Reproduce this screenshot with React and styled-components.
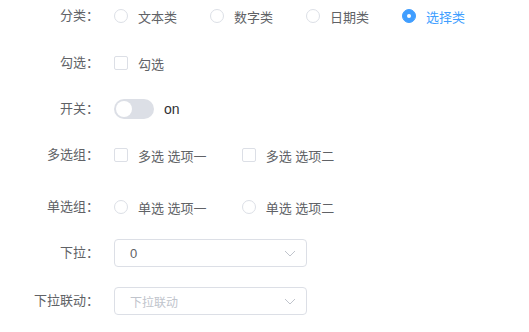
import React, { useState } from "react";
import styled, { createGlobalStyle } from "styled-components";

const GlobalStyle = createGlobalStyle`
  body {
    margin: 0;
    background: #fff;
    font-family: "Liberation Sans", "Noto Sans CJK SC", sans-serif;
    font-size: 13px;
    color: #606266;
  }
`;

const Form = styled.div`
  display: flex;
  flex-direction: column;
  padding-top: 2px;
`;

const Item = styled.div`
  display: flex;
  align-items: center;
  height: 28px;
  margin-bottom: ${(p) => p.$gap}px;
`;

const Label = styled.label`
  width: 114px;
  box-sizing: border-box;
  padding-right: 15px;
  text-align: right;
  color: #606266;
  line-height: 28px;
`;

const Content = styled.div`
  display: flex;
  align-items: center;
`;

const Choice = styled.label`
  display: flex;
  align-items: center;
  margin-right: ${(p) => p.$mr || 33}px;
  color: ${(p) => (p.$active ? "#409eff" : "#606266")};
  cursor: pointer;
  white-space: nowrap;
`;

const RadioDot = styled.span`
  width: 14px;
  height: 14px;
  box-sizing: border-box;
  border-radius: 50%;
  border: 1px solid ${(p) => (p.$on ? "#409eff" : "#dcdfe6")};
  background: ${(p) => (p.$on ? "#409eff" : "#fff")};
  margin-right: 10px;
  display: flex;
  align-items: center;
  justify-content: center;
  &::after {
    content: "";
    width: 4px;
    height: 4px;
    border-radius: 50%;
    background: #fff;
    display: ${(p) => (p.$on ? "block" : "none")};
  }
`;

const Box = styled.span`
  width: 14px;
  height: 14px;
  box-sizing: border-box;
  border-radius: 2px;
  border: 1px solid #dcdfe6;
  background: #fff;
  margin-right: 10px;
`;

const Switch = styled.span`
  width: 40px;
  height: 20px;
  border-radius: 10px;
  background: #dcdfe6;
  position: relative;
  margin-right: 10px;
  &::after {
    content: "";
    position: absolute;
    top: 2px;
    left: 2px;
    width: 16px;
    height: 16px;
    border-radius: 50%;
    background: #fff;
  }
`;

const SwitchText = styled.span`
  color: #303133;
  font-size: 14px;
`;

const Select = styled.div`
  width: 193px;
  height: 28px;
  box-sizing: border-box;
  border: 1px solid #dcdfe6;
  border-radius: 4px;
  display: flex;
  align-items: center;
  justify-content: space-between;
  padding: 0 10px 0 15px;
  color: ${(p) => (p.$placeholder ? "#c0c4cc" : "#606266")};
  font-size: ${(p) => (p.$placeholder ? 12 : 13)}px;
`;

const Arrow = () => (
  <svg width="12" height="12" viewBox="0 0 12 12">
    <path d="M1 4l5 5 5-5" fill="none" stroke="#c0c4cc" strokeWidth="1" />
  </svg>
);

const types = ["文本类", "数字类", "日期类", "选择类"];

export default function App() {
  const [type, setType] = useState("选择类");
  return (
    <>
      <GlobalStyle />
      <Form>
        <Item $gap={19}>
          <Label>分类：</Label>
          <Content>
            {types.map((t) => (
              <Choice key={t} $active={type === t} onClick={() => setType(t)}>
                <RadioDot $on={type === t} />
                {t}
              </Choice>
            ))}
          </Content>
        </Item>
        <Item $gap={18}>
          <Label>勾选：</Label>
          <Content>
            <Choice>
              <Box />
              勾选
            </Choice>
          </Content>
        </Item>
        <Item $gap={18}>
          <Label>开关：</Label>
          <Content>
            <Switch />
            <SwitchText>on</SwitchText>
          </Content>
        </Item>
        <Item $gap={24}>
          <Label>多选组：</Label>
          <Content>
            <Choice $mr={35}>
              <Box />
              多选 选项一
            </Choice>
            <Choice>
              <Box />
              多选 选项二
            </Choice>
          </Content>
        </Item>
        <Item $gap={18}>
          <Label>单选组：</Label>
          <Content>
            <Choice $mr={35}>
              <RadioDot />
              单选 选项一
            </Choice>
            <Choice>
              <RadioDot />
              单选 选项二
            </Choice>
          </Content>
        </Item>
        <Item $gap={20}>
          <Label>下拉：</Label>
          <Select>
            <span>0</span>
            <Arrow />
          </Select>
        </Item>
        <Item $gap={0}>
          <Label>下拉联动：</Label>
          <Select $placeholder>
            <span>下拉联动</span>
            <Arrow />
          </Select>
        </Item>
      </Form>
    </>
  );
}
